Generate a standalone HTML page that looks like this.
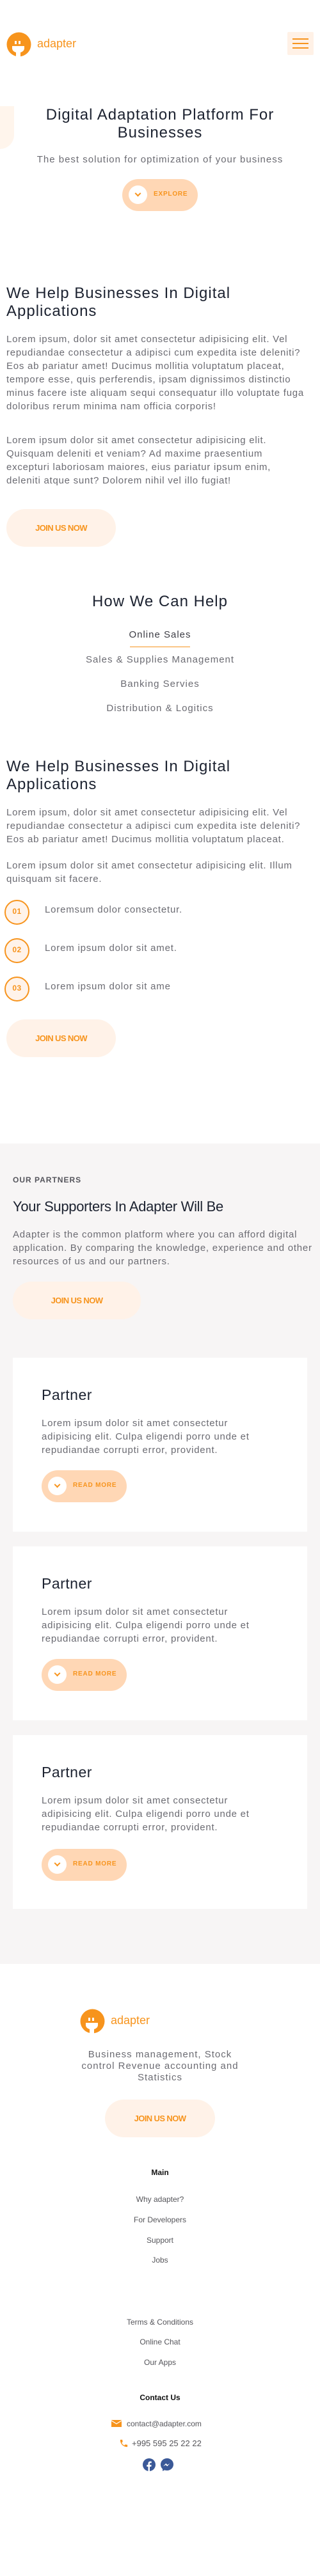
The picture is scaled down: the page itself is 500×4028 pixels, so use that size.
<!DOCTYPE html>
<html><head><meta charset="utf-8"><style>
*{margin:0;padding:0;box-sizing:border-box}
body{width:500px;height:4028px;position:relative;background:#fff;font-family:"Liberation Sans",sans-serif;overflow:hidden}
.a{position:absolute}
.h{color:#1c2230;font-size:24px;letter-spacing:1px;line-height:28px;font-weight:500}
.p{color:#6b6b72;font-size:15px;letter-spacing:0.75px;line-height:21px}
.c{left:0;width:500px;text-align:center}
.btn{position:absolute;background:#fff2e8;border-radius:30px;color:#f7941d;font-size:13px;font-weight:bold;letter-spacing:-0.6px;display:flex;align-items:center;justify-content:center}
.pill{position:absolute;background:#ffd7b5;border-radius:26px;height:50px}
.pill .w{position:absolute;left:10px;top:10px;width:29px;height:29px;border-radius:50%;background:#fff}
.pill .w:after{content:"";position:absolute;left:11px;top:9px;width:5px;height:5px;border-right:2px solid #f7941d;border-bottom:2px solid #f7941d;transform:rotate(45deg)}
.pill span{position:absolute;left:49px;top:18px;color:#f7941d;font-size:10px;font-weight:bold;letter-spacing:0.8px}
.num{position:absolute;left:7px;width:39px;height:39px;border:2px solid #f7941d;border-radius:50%;background:#fff3ea;color:#f7941d;font-size:12px;font-weight:bold;text-align:center;line-height:32px;letter-spacing:0.5px}
.li{position:absolute;left:70px;color:#6b6b72;font-size:15px;letter-spacing:0.8px}
.card{position:absolute;left:20px;width:460px;height:272px;background:#fff}
.f{color:#55555a;font-size:12px;line-height:14px}
</style></head><body>
<svg class="a" style="left:10px;top:50px" width="39" height="39" viewBox="0 0 39 39"><circle cx="19.5" cy="19.5" r="19" fill="#f7941d"/><rect x="13" y="14" width="3" height="5" fill="#fff"/><rect x="19" y="14" width="3" height="5" fill="#fff"/><path d="M9 22h19v4a9.5 7 0 0 1-6 6v7h-7v-7a9.5 7 0 0 1-6-6z" fill="#fff"/></svg>
<div class="a" style="left:58px;top:58px;color:#f7941d;font-size:18px;font-weight:500">adapter</div>
<div class="a" style="left:449px;top:50px;width:41px;height:36px;background:#fff1e6;border-radius:2px"></div>
<div class="a" style="left:457px;top:60px;width:25px;height:2px;background:#f7941d"></div>
<div class="a" style="left:457px;top:67px;width:25px;height:2px;background:#f7941d"></div>
<div class="a" style="left:457px;top:74px;width:25px;height:2px;background:#f7941d"></div>
<div class="a" style="left:0;top:166px;width:22px;height:67px;background:#fff5ec;border-radius:0 0 22px 0"></div>
<div class="a c h" style="top:166px">Digital Adaptation Platform For<br>Businesses</div>
<div class="a c" style="top:241px;color:#6b6b72;font-size:15px;letter-spacing:1px">The best solution for optimization of your business</div>
<div class="pill" style="left:191px;top:280px;width:118px"><div class="w"></div><span>EXPLORE</span></div>
<div class="a h" style="left:10px;top:445px">We Help Businesses In Digital<br>Applications</div>
<div class="a p" style="left:10px;top:520px;width:490px">Lorem ipsum, dolor sit amet consectetur adipisicing elit. Vel repudiandae consectetur a adipisci cum expedita iste deleniti? Eos ab pariatur amet! Ducimus mollitia voluptatum placeat, tempore esse, quis perferendis, ipsam dignissimos distinctio minus facere iste aliquam sequi consequatur illo voluptate fuga doloribus rerum minima nam officia corporis!</div>
<div class="a p" style="left:10px;top:678px;width:470px">Lorem ipsum dolor sit amet consectetur adipisicing elit. Quisquam deleniti et veniam? Ad maxime praesentium excepturi laboriosam maiores, eius pariatur ipsum enim, deleniti atque sunt? Dolorem nihil vel illo fugiat!</div>
<div class="btn" style="left:10px;top:796px;width:171px;height:59px">JOIN US NOW</div>
<div class="a c h" style="top:927px">How We Can Help</div>
<div class="a c" style="top:984px;color:#3c3c44;font-size:15px;letter-spacing:1px">Online Sales</div>
<div class="a" style="left:203px;top:1011px;width:94px;height:1px;background:#f7941d"></div>
<div class="a c" style="top:1023px;color:#6b6b72;font-size:15px;letter-spacing:1px">Sales &amp; Supplies Management</div>
<div class="a c" style="top:1061px;color:#6b6b72;font-size:15px;letter-spacing:1px">Banking Servies</div>
<div class="a c" style="top:1099px;color:#6b6b72;font-size:15px;letter-spacing:1px">Distribution &amp; Logitics</div>
<div class="a h" style="left:10px;top:1185px">We Help Businesses In Digital<br>Applications</div>
<div class="a p" style="left:10px;top:1260px;width:490px">Lorem ipsum, dolor sit amet consectetur adipisicing elit. Vel repudiandae consectetur a adipisci cum expedita iste deleniti? Eos ab pariatur amet! Ducimus mollitia voluptatum placeat.</div>
<div class="a p" style="left:10px;top:1343px;width:490px">Lorem ipsum dolor sit amet consectetur adipisicing elit. Illum quisquam sit facere.</div>
<div class="num" style="top:1407px">01</div><div class="li" style="top:1414px">Loremsum dolor consectetur.</div>
<div class="num" style="top:1467px">02</div><div class="li" style="top:1474px">Lorem ipsum dolor sit amet.</div>
<div class="num" style="top:1527px">03</div><div class="li" style="top:1534px">Lorem ipsum dolor sit ame</div>
<div class="btn" style="left:10px;top:1594px;width:171px;height:59px">JOIN US NOW</div>
<div class="a" style="left:0;top:1788px;width:500px;height:1283px;background:#f7f5f5"></div>
<div class="a" style="left:20px;top:1838px;color:#55555c;font-size:12px;font-weight:bold;letter-spacing:1px">OUR PARTNERS</div>
<div class="a" style="left:20px;top:1874px;color:#1c2230;font-size:22px;font-weight:500;letter-spacing:-0.3px">Your Supporters In Adapter Will Be</div>
<div class="a p" style="left:20px;top:1920px;width:470px">Adapter is the common platform where you can afford digital application. By comparing the knowledge, experience and other resources of us and our partners.</div>
<div class="btn" style="left:20px;top:2004px;width:200px;height:59px">JOIN US NOW</div>
<div class="card" style="top:2123px"></div>
<div class="card" style="top:2418px"></div>
<div class="card" style="top:2713px"></div>
<div class="a" style="left:65px;top:2168px;color:#1c2230;font-size:23px;font-weight:500;letter-spacing:0.5px">Partner</div>
<div class="a p" style="left:65px;top:2215px;width:355px">Lorem ipsum dolor sit amet consectetur adipisicing elit. Culpa eligendi porro unde et repudiandae corrupti error, provident.</div>
<div class="pill" style="left:65px;top:2299px;width:133px"><div class="w"></div><span>READ MORE</span></div>
<div class="a" style="left:65px;top:2463px;color:#1c2230;font-size:23px;font-weight:500;letter-spacing:0.5px">Partner</div>
<div class="a p" style="left:65px;top:2510px;width:355px">Lorem ipsum dolor sit amet consectetur adipisicing elit. Culpa eligendi porro unde et repudiandae corrupti error, provident.</div>
<div class="pill" style="left:65px;top:2594px;width:133px"><div class="w"></div><span>READ MORE</span></div>
<div class="a" style="left:65px;top:2758px;color:#1c2230;font-size:23px;font-weight:500;letter-spacing:0.5px">Partner</div>
<div class="a p" style="left:65px;top:2805px;width:355px">Lorem ipsum dolor sit amet consectetur adipisicing elit. Culpa eligendi porro unde et repudiandae corrupti error, provident.</div>
<div class="pill" style="left:65px;top:2891px;width:133px"><div class="w"></div><span>READ MORE</span></div>
<svg class="a" style="left:125px;top:3141px" width="39" height="39" viewBox="0 0 39 39"><circle cx="19.5" cy="19.5" r="19" fill="#f7941d"/><rect x="13" y="14" width="3" height="5" fill="#fff"/><rect x="19" y="14" width="3" height="5" fill="#fff"/><path d="M9 22h19v4a9.5 7 0 0 1-6 6v7h-7v-7a9.5 7 0 0 1-6-6z" fill="#fff"/></svg>
<div class="a" style="left:173px;top:3149px;color:#f7941d;font-size:18px;font-weight:500">adapter</div>
<div class="a c" style="top:3204px;color:#6b6b72;font-size:15px;letter-spacing:1px;line-height:18px;padding:0 125px">Business management, Stock control Revenue accounting and Statistics</div>
<div class="btn" style="left:164px;top:3283px;width:172px;height:59px">JOIN US NOW</div>
<div class="a c" style="top:3390px;color:#111;font-size:12px;font-weight:bold">Main</div>
<div class="a c f" style="top:3432px">Why adapter?</div>
<div class="a c f" style="top:3464px">For Developers</div>
<div class="a c f" style="top:3496px">Support</div>
<div class="a c f" style="top:3527px">Jobs</div>
<div class="a c f" style="top:3624px">Terms &amp; Conditions</div>
<div class="a c f" style="top:3655px">Online Chat</div>
<div class="a c f" style="top:3687px">Our Apps</div>
<div class="a c" style="top:3742px;color:#111;font-size:12px;font-weight:bold">Contact Us</div>
<svg class="a" style="left:174px;top:3784px" width="16" height="11" viewBox="0 0 16 11"><rect width="16" height="11" fill="#f7941d"/><path d="M0 1l8 5 8-5" stroke="#fff" stroke-width="1.3" fill="none"/></svg>
<div class="a f" style="left:198px;top:3783px">contact@adapter.com</div>
<svg class="a" style="left:186px;top:3813px" width="15" height="15" viewBox="0 0 24 24"><path d="M6.6 10.8c1.4 2.8 3.8 5.1 6.6 6.6l2.2-2.2c.3-.3.7-.4 1-.2 1.1.4 2.3.6 3.6.6.6 0 1 .4 1 1V20c0 .6-.4 1-1 1C10.6 21 3 13.4 3 4c0-.6.4-1 1-1h3.5c.6 0 1 .4 1 1 0 1.300.2 2.5.6 3.6.1.3 0 .7-.2 1z" fill="#f7941d"/></svg>
<div class="a f" style="left:206px;top:3814px;font-size:13px">+995 595 25 22 22</div>
<svg class="a" style="left:223px;top:3844px" width="20" height="20" viewBox="0 0 20 20"><circle cx="10" cy="10" r="10" fill="#3b5998"/><path d="M11 20v-7h2.3l.4-2.7H11V8.6c0-.8.3-1.3 1.4-1.3h1.4V4.9c-.3 0-1.1-.1-2-.1-2 0-3.3 1.2-3.3 3.4v2.1H6.3V13h2.2v7z" fill="#fff"/></svg>
<svg class="a" style="left:251px;top:3844px" width="20" height="20" viewBox="0 0 20 20"><path d="M10 0C4.4 0 0 4.1 0 9.600c0 2.9 1.2 5.4 3.1 7.1V20l2.9-1.6c1.3.4 2.6.6 4 .6 5.6 0 10-4.1 10-9.5S15.6 0 10 0z" fill="#3b5998"/><path d="M4 12.5l4.3-4.6 2.2 2.3 4-2.3-4.3 4.6-2.2-2.3z" fill="#fff"/></svg>
</body></html>
